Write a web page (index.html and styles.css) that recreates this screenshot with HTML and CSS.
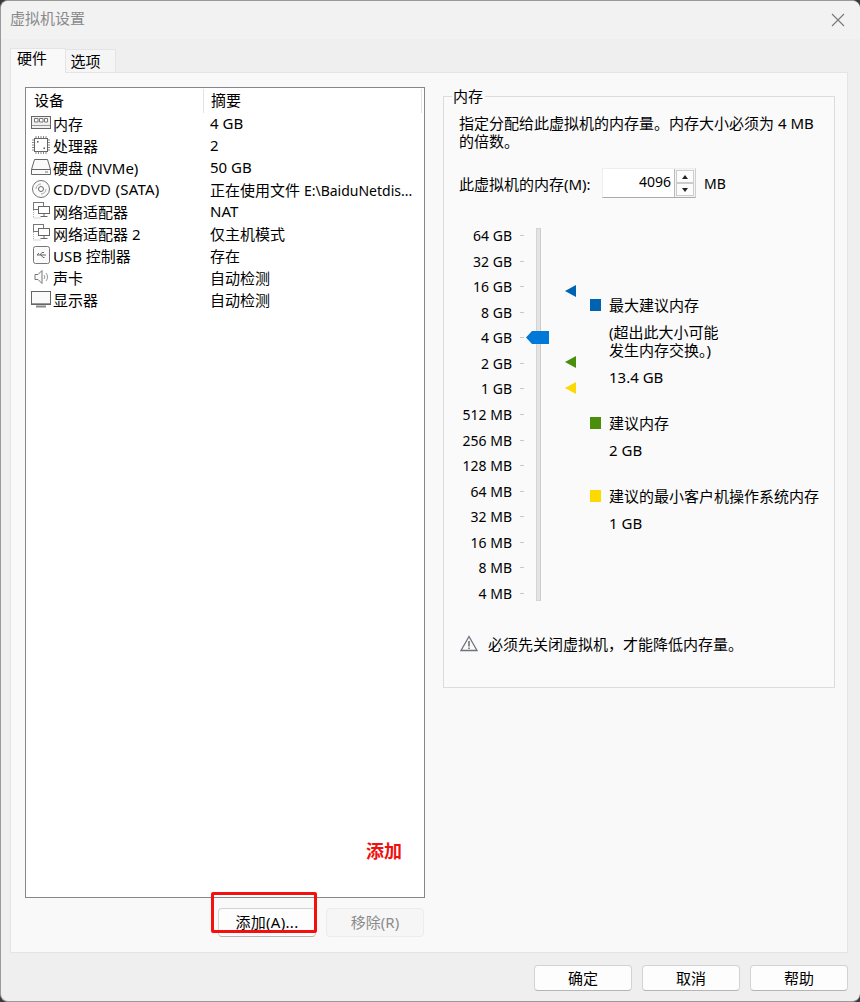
FILE: index.html
```html
<!DOCTYPE html>
<html lang="zh-CN">
<head>
<meta charset="utf-8">
<title>虚拟机设置</title>
<link rel="stylesheet" href="styles.css">
</head>
<body>
<div class="window">
  <header class="titlebar">
    <span class="title">虚拟机设置</span>
    <svg class="close" width="14" height="14" viewBox="0 0 14 14"><path d="M1 1l12 12M13 1L1 13" stroke="#777" stroke-width="1.1" fill="none"/></svg>
  </header>
  <nav class="tabs">
    <span class="tab active">硬件</span>
    <span class="tab">选项</span>
  </nav>
  <main class="panel">
    <section class="left">
      <div class="list">
        <div class="list-head"><span class="col-a">设备</span><span class="col-b">摘要</span></div>
        <div class="row"><svg class="ico" viewBox="0 0 20 20"><rect x="0.5" y="3.5" width="19" height="12" fill="#f0f0f0" stroke="#666"/><path d="M3.500 5.500h3.500v3.500H3.500zM8.500 5.500h3.500v3.500H8.500zM13.500 5.500h3v3.500h-3z" fill="#fff" stroke="#777"/><path d="M1 12.500h18" stroke="#999"/></svg><span class="name">内存</span><span class="val">4 GB</span></div>
        <div class="row"><svg class="ico" viewBox="0 0 20 20"><rect x="3.5" y="3.5" width="13" height="13" fill="#fff" stroke="#666"/><path d="M5 1v2M7.5 1v2M10 1v2M12.5 1v2M15 1v2M5 17v2M7.5 17v2M10 17v2M12.5 17v2M15 17v2M1 5h2M1 7.5h2M1 10h2M1 12.5h2M1 15h2M17 5h2M17 7.5h2M17 10h2M17 12.5h2M17 15h2" stroke="#888"/><path d="M6 6h1.500v1.500H6zM12.500 12.500H14V14h-1.500z" fill="#555"/></svg><span class="name">处理器</span><span class="val">2</span></div>
        <div class="row"><svg class="ico" viewBox="0 0 20 20"><path d="M3.500 2.500h13l3 10v5H.5v-5z" fill="#fafafa" stroke="#666"/><path d="M.5 12.500h19" stroke="#666"/><path d="M14 15h3" stroke="#777"/></svg><span class="name">硬盘 (NVMe)</span><span class="val">50 GB</span></div>
        <div class="row"><svg class="ico" viewBox="0 0 20 20"><circle cx="10" cy="10" r="8.500" fill="#fafafa" stroke="#777"/><circle cx="10" cy="10" r="2.500" fill="#fff" stroke="#666"/><path d="M5 10a5 5 0 0 1 5-5" stroke="#aaa" fill="none"/><path d="M15 10a5 5 0 0 1-5 5" stroke="#aaa" fill="none"/></svg><span class="name wide">CD/DVD (SATA)</span><span class="val">正在使用文件 <span class="path">E:\BaiduNetdis...</span></span></div>
        <div class="row"><svg class="ico" viewBox="0 0 20 20"><rect x="2.500" y="1.500" width="10" height="7" fill="#fff" stroke="#777"/><rect x="7.500" y="5.500" width="11" height="7" fill="#fff" stroke="#666"/><path d="M13 13v2M9.500 15.500h7" stroke="#666"/><path d="M2.500 9v8h8" stroke="#aaa" stroke-dasharray="1 1" fill="none"/></svg><span class="name">网络适配器</span><span class="val">NAT</span></div>
        <div class="row"><svg class="ico" viewBox="0 0 20 20"><rect x="2.500" y="1.500" width="10" height="7" fill="#fff" stroke="#777"/><rect x="7.500" y="5.500" width="11" height="7" fill="#fff" stroke="#666"/><path d="M13 13v2M9.500 15.500h7" stroke="#666"/><path d="M2.500 9v8h8" stroke="#aaa" stroke-dasharray="1 1" fill="none"/></svg><span class="name">网络适配器 2</span><span class="val">仅主机模式</span></div>
        <div class="row"><svg class="ico" viewBox="0 0 20 20"><rect x="2.500" y="1.500" width="16" height="17" rx="2" fill="#fafafa" stroke="#777"/><path d="M6 10h9M6 10l2-2M9 10l2-2.500h2M10 10l2 2.500h1.500" stroke="#666" fill="none"/></svg><span class="name">USB 控制器</span><span class="val">存在</span></div>
        <div class="row"><svg class="ico" viewBox="0 0 20 20"><path d="M4 7.500h3l4-4v13l-4-4H4z" fill="#fafafa" stroke="#777"/><path d="M13 8a3 3 0 0 1 0 4M15 6a6 6 0 0 1 0 8" stroke="#999" fill="none"/></svg><span class="name">声卡</span><span class="val">自动检测</span></div>
        <div class="row"><svg class="ico" viewBox="0 0 20 20"><rect x="0.500" y="2.500" width="19" height="13" fill="#fafafa" stroke="#666"/><path d="M1 14.500h18" stroke="#999"/><path d="M5 17.500h10" stroke="#888" stroke-width="2"/></svg><span class="name">显示器</span><span class="val">自动检测</span></div>
      </div>
      <div class="list-actions">
        <button class="btn add">添加(A)...</button>
        <button class="btn remove">移除(R)</button>
      </div>
      <span class="note">添加</span>
      <span class="redbox"></span>
    </section>
    <fieldset class="group">
      <legend>内存</legend>
      <p class="desc">指定分配给此虚拟机的内存量。内存大小必须为 4 MB<br>的倍数。</p>
      <div class="mem-row">
        <span class="mem-label">此虚拟机的内存(M):</span>
        <span class="spin"><span class="spin-val">4096</span><span class="spin-btns"><span class="up"><i class="tri-up"></i></span><span class="down"><i class="tri-down"></i></span></span></span>
        <span class="unit">MB</span>
      </div>
      <div class="scale-area">
        <ul class="scale">
          <li>64 GB</li><li>32 GB</li><li>16 GB</li><li>8 GB</li><li>4 GB</li><li>2 GB</li><li>1 GB</li><li>512 MB</li><li>256 MB</li><li>128 MB</li><li>64 MB</li><li>32 MB</li><li>16 MB</li><li>8 MB</li><li>4 MB</li>
        </ul>
        <div class="track"></div>
        <i class="thumb"></i>
        <i class="mark m-blue"></i>
        <i class="mark m-green"></i>
        <i class="mark m-yellow"></i>
        <div class="legend-list">
          <div class="leg l-max"><i class="sq blue"></i><div><p>最大建议内存</p><p class="sub">(超出此大小可能<br>发生内存交换。)</p><p class="amt">13.4 GB</p></div></div>
          <div class="leg l-rec"><i class="sq green"></i><div><p>建议内存</p><p class="amt">2 GB</p></div></div>
          <div class="leg l-min"><i class="sq yellow"></i><div><p>建议的最小客户机操作系统内存</p><p class="amt">1 GB</p></div></div>
        </div>
      </div>
      <div class="warn">
        <svg width="18" height="17" viewBox="0 0 18 17"><path d="M9 1.500L17 15.500H1z" fill="#fafafa" stroke="#6d7480" stroke-width="1.300"/><path d="M9 6v5.500M9 12.500v1.500" stroke="#555" stroke-width="1.300"/></svg>
        <span>必须先关闭虚拟机，才能降低内存量。</span>
      </div>
    </fieldset>
  </main>
  <footer class="footer">
    <button class="btn foot">确定</button>
    <button class="btn foot">取消</button>
    <button class="btn foot">帮助</button>
  </footer>
</div>
</body>
</html>
```
FILE: styles.css
```css
* { box-sizing: border-box; }
html, body { margin: 0; padding: 0; background: #3a3a3a; }
body { width: 860px; height: 1002px; overflow: hidden; font-family: "Noto Sans", "Noto Sans CJK SC", sans-serif; font-size: 15px; color: #000; }
p { margin: 0; }
.window { width: 860px; height: 1002px; background: #efefef; border-radius: 8px; border: 1px solid #9a9a9a; border-right: 0; display: flex; flex-direction: column; overflow: hidden; }
.titlebar { height: 38px; flex: none; background: #f2f2f2; display: flex; align-items: center; justify-content: space-between; padding: 0 15px 4px 9px; }
.close { margin-top: 3px; }
.title { color: #8a8a8a; line-height: 20px; }
.tabs { height: 33px; flex: none; padding: 8px 0 0 9px; display: flex; align-items: flex-end; }
.tab { width: 50px; height: 23px; background: #f5f5f5; border: 1px solid #e4e4e4; border-bottom: 0; border-left: 0; padding-right: 10px; text-align: center; line-height: 22px; }
.tab.active { width: 56px; height: 25px; background: #f9f9f9; border: 1px solid #e4e4e4; border-bottom: 0; line-height: 19px; padding-right: 12px; margin-bottom: -1px; position: relative; z-index: 1; }
.panel { width: 838px; height: 881px; margin-left: 9px; background: #f9f9f9; border: 1px solid #e4e4e4; padding: 14px 0 0 14px; display: flex; flex: none; }
.left { width: 400px; position: relative; flex: none; }
.list { width: 400px; height: 811px; background: #fff; border: 1px solid #85878c; }
.list-head { height: 24px; display: flex; }
.col-a { width: 178px; padding-left: 8px; border-right: 1px solid #e3e3e3; height: 24px; line-height: 22px; margin-top: 1px; }
.col-b { flex: 1; padding-left: 7px; border-right: 1px solid #e3e3e3; margin-right: 2px; height: 24px; margin-top: 1px; line-height: 22px; }
.row { height: 22px; display: flex; align-items: center; padding-left: 5px; white-space: nowrap; }
.ico { width: 20px; height: 20px; flex: none; margin-right: 2px; }
.name { width: 157px; flex: none; }
.wide { letter-spacing: 0.25px; }
.path { font-size: 14px; }
.val { flex: none; }
.list-actions { display: flex; justify-content: flex-end; gap: 10px; margin-top: 10px; margin-right: 1px; }
.btn { font: inherit; font-size: 15px; width: 98px; height: 29px; padding: 0 0 2px; background: #fdfdfd; border: 1px solid #d2d2d2; border-bottom-color: #b5b5b5; border-radius: 4px; color: #000; }
.btn.add { letter-spacing: 0.3px; }
.btn.remove { background: #f6f6f6; border-color: #ececec; color: #8b8b8b; }
.note { position: absolute; left: 341px; top: 751px; font-size: 18px; font-weight: 700; color: #f01010; line-height: 26px; }
.redbox { position: absolute; left: 186px; top: 805px; width: 106px; height: 41px; border: 3px solid #f5100f; border-radius: 2px; }
.group { width: 392px; height: 602px; margin: -1px 0 0 18px; padding: 0 0 0 15px; border: 1px solid #dcdcdc; background: #fafafa; min-width: 0; flex: none; }
.group legend { padding: 0 2px 0 1px; margin-left: -7px; line-height: 20px; height: 20px; }
.desc { line-height: 18px; margin-top: 8px; }
.mem-row { display: flex; align-items: center; height: 30px; margin-top: 18px; white-space: nowrap; }
.mem-label { width: 143px; flex: none; }
.spin { width: 94px; height: 30px; flex: none; display: flex; margin-right: 8px; background: #fff; border: 1px solid #cfcfcf; border-left-color: #eee; border-top-color: #eee; border-bottom-color: #aaa; font-size: 14px; }
.unit { font-size: 14px; }
.spin-val { flex: 1; text-align: right; padding-right: 3px; line-height: 26px; }
.spin-btns { width: 21px; flex: none; display: flex; flex-direction: column; border-left: 1px solid #bbb; padding: 1px; background: #f4f4f4; }
.spin-btns span { flex: 1; background: #fcfcfc; border: 1px solid #ccc; display: flex; align-items: center; justify-content: center; }
.tri-up { width: 0; height: 0; border: 3.500px solid transparent; border-top: 0; border-bottom: 4px solid #222; }
.tri-down { width: 0; height: 0; border: 3.500px solid transparent; border-bottom: 0; border-top: 4px solid #222; }
.scale-area { position: relative; height: 374px; margin-top: 30px; margin-left: -15px; display: flex; }
.scale { list-style: none; padding: 0; width: 68px; flex: none; margin: -5px 0 0 0; font-size: 14px; }
.scale li { height: 25.570px; line-height: 26px; text-align: right; padding-right: 0; position: relative; white-space: nowrap; }
.scale li::after { content: ""; position: absolute; right: -12px; top: 12px; width: 4px; height: 1px; background: #c8c8c8; }
.track { position: absolute; left: 92px; top: 0; width: 5px; height: 373px; background: #e3e3e3; border: 1px solid #d4d4d4; border-right-color: #ccc; }
.thumb { position: absolute; left: 82px; top: 103px; width: 23px; height: 13px; background: #0078d7; clip-path: polygon(0 50%, 6px 0, 100% 0, 100% 100%, 6px 100%); }
.mark { position: absolute; left: 121px; width: 11px; height: 12px; clip-path: polygon(0 50%, 100% 0, 100% 100%); }
.m-blue { top: 57px; background: #0063b1; }
.m-green { top: 128px; background: #498f0b; }
.m-yellow { top: 154px; background: #fcd902; }
.legend-list { position: absolute; left: 146px; top: 0; width: 240px; }
.leg { display: flex; gap: 8px; }
.sq { width: 11px; height: 12px; flex: none; margin-top: 3px; }
.blue { background: #0063b1; }
.green { background: #498f0b; }
.yellow { background: #fdd900; }
.leg p { line-height: 18px; white-space: nowrap; }
.leg .sub { margin-top: 9px; }
.leg .amt { margin-top: 9px; line-height: 18px; }
.l-max { margin-top: 68px; }
.l-rec { margin-top: 28px; }
.l-min { margin-top: 28px; }
.warn { display: flex; align-items: center; gap: 10px; height: 20px; margin-top: 31px; margin-left: 1px; }
.footer { flex: 1; display: flex; justify-content: flex-end; gap: 10px; padding: 12px 12px 0 0; }
.foot { height: 26px; width: 98px; }
```
